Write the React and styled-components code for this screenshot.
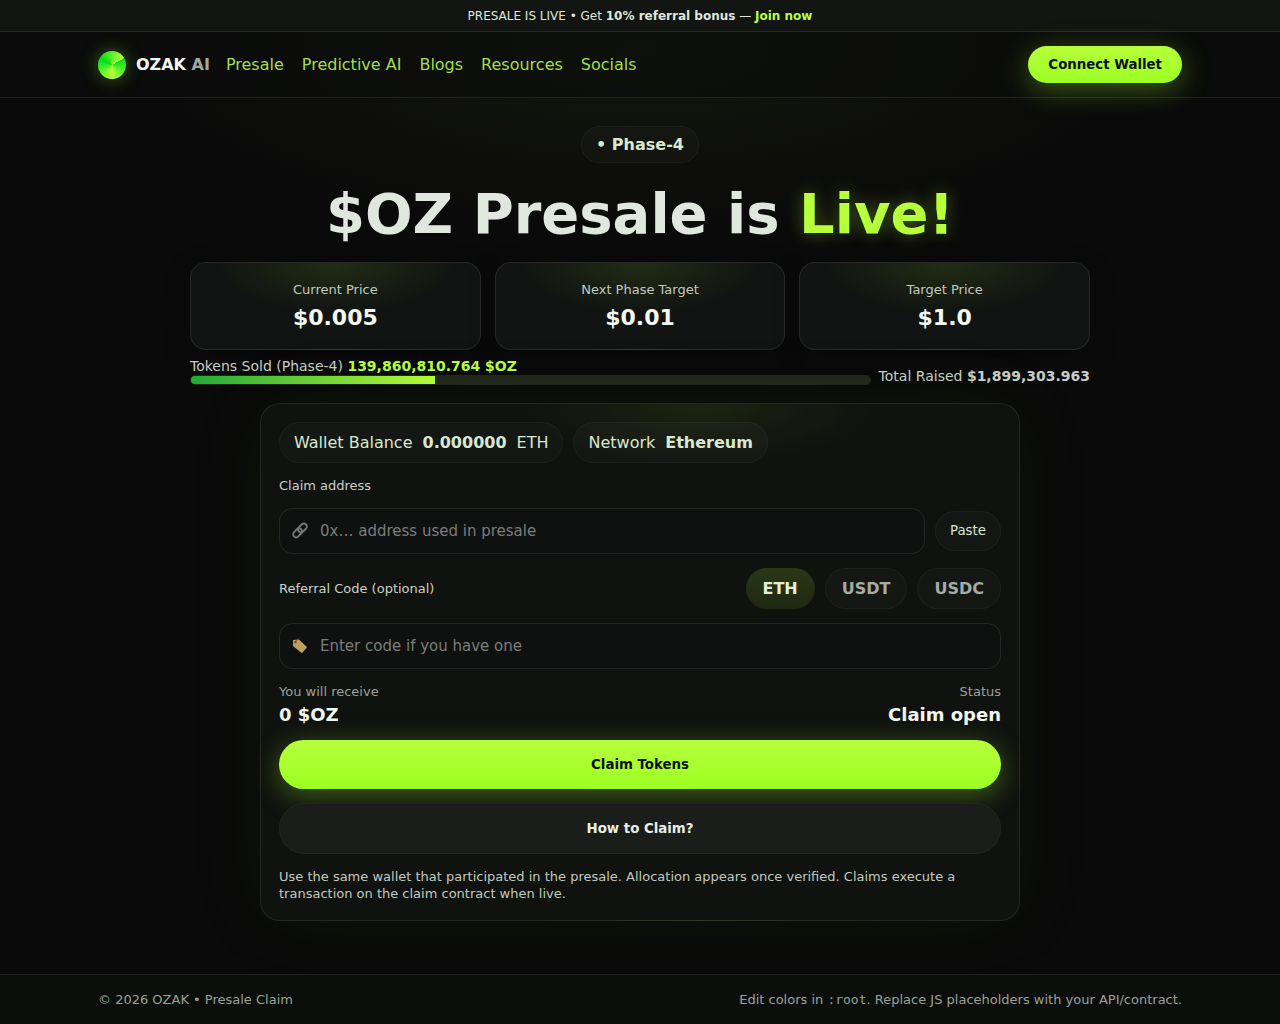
import React, { useState } from "react";
import styled, { createGlobalStyle, css } from "styled-components";

const GlobalStyle = createGlobalStyle`
  * { box-sizing: border-box; }
  html { background: #0a0a0a; }
  body {
    margin: 0;
    color: #dfe7df;
    font: 16px/19px "DejaVu Sans", sans-serif;
    background: radial-gradient(ellipse 40% 180px at 50% 50px, #14170e, transparent) no-repeat;
  }
  button, input { font-family: inherit; }
`;

const line = "rgba(255, 255, 255, 0.09)";
const softLine = "rgba(255, 255, 255, 0.04)";
const lime = "#b6ff3a";

const Page = styled.div`
  min-height: 100vh;
  display: flex;
  flex-direction: column;
`;

const TopBar = styled.div`
  padding: 9px 18px 7px;
  border-bottom: 1px solid ${line};
  background: #121512;
  font-size: 12px;
  line-height: 15px;
  text-align: center;
`;

const JoinLink = styled.a`
  color: ${lime};
  font-weight: 700;
  text-decoration: none;
`;

const Header = styled.header`
  border-bottom: 1px solid ${line};
  background: rgba(10, 11, 10, 0.6);
`;

const Container = styled.div`
  max-width: 1120px;
  margin: 0 auto;
  padding: ${(p) => p.$padY}px 18px;
  display: flex;
  align-items: center;
  justify-content: space-between;
  gap: 14px;
`;

const HeaderStart = styled.div`
  display: flex;
  align-items: center;
  gap: 16px;
`;

const Brand = styled.div`
  display: flex;
  align-items: center;
  gap: 10px;
  color: #f2f7f0;
  font-weight: 700;
`;

const Logo = styled.span`
  width: 28px;
  height: 28px;
  border-radius: 50%;
  background: conic-gradient(from 60deg, #00e01a, ${lime}, #00e01a, ${lime});
  box-shadow: 0 0 18px rgba(182, 255, 58, 0.35);
`;

const Muted = styled.span`
  color: #a2a7a2;
`;

const Nav = styled.nav`
  display: flex;
  gap: 18px;
`;

const NavLink = styled.a`
  color: #a3df43;
  text-decoration: none;
`;

const PrimaryButton = styled.button`
  border: 0;
  border-radius: 999px;
  padding: ${(p) => (p.$wide ? 16 : 10)}px 20px;
  background: linear-gradient(180deg, ${lime}, #9dff23);
  box-shadow: 0 6px 28px rgba(166, 255, 40, 0.34);
  color: #0a0f06;
  font-weight: 700;
  line-height: 17px;
`;

const SecondaryButton = styled(PrimaryButton)`
  border: 1px solid ${softLine};
  background: #1b1d1b;
  box-shadow: none;
  color: #e8eee5;
`;

const Main = styled.main`
  flex: 1;
  width: 100%;
  max-width: 936px;
  margin: 0 auto;
  padding: 28px 18px 53px;
  display: flex;
  flex-direction: column;
  align-items: center;
`;

const Pill = styled.span`
  display: inline-flex;
  align-items: center;
  gap: 10px;
  padding: ${(p) => (p.$small ? 8 : 10)}px 14px;
  border: 1px solid ${softLine};
  border-radius: 999px;
  background: rgba(255, 255, 255, 0.025);
  color: #d9e8d0;
  font-weight: ${(p) => (p.$small ? 700 : 400)};
`;

const Title = styled.h1`
  margin: 20px 0 18px;
  font-size: 56px;
  line-height: 61px;
  font-weight: 700;
  text-align: center;
`;

const Live = styled.span`
  color: ${lime};
  text-shadow: 0 0 18px rgba(182, 255, 58, 0.35);
`;

const Stats = styled.section`
  width: 100%;
  display: grid;
  grid-template-columns: repeat(3, 1fr);
  gap: 14px;
`;

const Stat = styled.div`
  display: flex;
  flex-direction: column;
  align-items: center;
  gap: 6px;
  padding: 19px 18px 17px;
  border: 1px solid ${line};
  border-radius: 16px;
  background:
    radial-gradient(ellipse 120px 50px at 50% 0, rgba(150, 220, 30, 0.12), transparent),
    #111412;
  box-shadow: 0 8px 30px rgba(0, 0, 0, 0.2);
`;

const StatLabel = styled.span`
  color: #c1c9c0;
  font-size: 13px;
  line-height: 16px;
`;

const StatValue = styled.strong`
  color: #f2f7f0;
  font-size: 22px;
  line-height: 28px;
`;

const Progress = styled.section`
  width: 100%;
  margin: 8px 0 18px;
  display: flex;
  align-items: flex-end;
  gap: 8px;
  color: #c6cfc5;
  font-size: 14px;
  line-height: 17px;
`;

const Sold = styled.div`
  flex: 1;
`;

const Highlight = styled.strong`
  color: ${lime};
`;

const Track = styled.div`
  height: 10px;
  border: 1px solid #22261d;
  border-radius: 999px;
  background: #22261d;
  overflow: hidden;
`;

const Fill = styled.div`
  height: 100%;
  background: linear-gradient(90deg, #22aa36, ${lime});
`;

const Card = styled.form`
  width: 100%;
  max-width: 760px;
  padding: 18px;
  display: grid;
  gap: 14px;
  border: 1px solid ${line};
  border-radius: 20px;
  background:
    radial-gradient(ellipse 180px 60px at 58% 0, rgba(150, 220, 30, 0.09), transparent),
    #0f120f;
  box-shadow: 0 0 80px rgba(80, 140, 30, 0.08);
`;

const Row = styled.div`
  display: flex;
  align-items: center;
  justify-content: ${(p) => (p.$spread ? "space-between" : "flex-start")};
  gap: 10px;
`;

const Label = styled.label`
  color: #c9d0c7;
  font-size: 13px;
  line-height: 17px;
`;

const Field = styled.div`
  flex: 1;
  display: flex;
  align-items: center;
  gap: 11px;
  height: 46px;
  padding: 0 11px;
  border: 1px solid ${line};
  border-radius: 14px;
  background: #0e110f;
`;

const Input = styled.input`
  flex: 1;
  min-width: 0;
  padding: 0;
  border: 0;
  outline: 0;
  background: transparent;
  color: #e8eee5;
  font-size: 15px;
  line-height: 18px;
  &::placeholder { color: #7b7d7b; opacity: 1; }
`;

const Icon = styled.svg`
  flex: none;
  width: 18px;
  height: 18px;
`;

const roundButton = css`
  border: 1px solid ${softLine};
  border-radius: 999px;
  background: rgba(255, 255, 255, 0.025);
`;

const PasteButton = styled.button`
  ${roundButton}
  padding: 10px 14px;
  color: #d9e8d0;
  line-height: 18px;
`;

const Tab = styled.button`
  ${roundButton}
  padding: 10px 16px;
  color: #a6aca4;
  font-size: 16px;
  font-weight: 700;
  line-height: 19px;
  ${(p) =>
    p.$active &&
    css`
      background: linear-gradient(180deg, #2a3716, #1e2812) border-box;
      border-color: transparent;
      color: #e3eed8;
    `}
`;

const Meta = styled.div`
  display: flex;
  flex-direction: column;
  gap: 4px;
  text-align: ${(p) => p.$align || "left"};
`;

const MetaLabel = styled.span`
  color: #9aa198;
  font-size: 13px;
  line-height: 17px;
`;

const MetaValue = styled.strong`
  color: #f2f7f0;
  font-size: 18px;
  line-height: 22px;
`;

const Note = styled.p`
  margin: 0;
  color: #c1c9c0;
  font-size: 13px;
  line-height: 17px;
`;

const Footer = styled.footer`
  border-top: 1px solid ${line};
  background: #0b0e0b;
  color: #9aa198;
  font-size: 13px;
  line-height: 17px;
`;

const Code = styled.code`
  font-family: "DejaVu Sans Mono", monospace;
  font-size: 13px;
`;

const stats = [
  ["Current Price", "$0.005"],
  ["Next Phase Target", "$0.01"],
  ["Target Price", "$1.0"],
];

function LinkIcon() {
  return (
    <Icon viewBox="0 0 18 18" fill="none" stroke="#747774" strokeWidth="1.9" aria-hidden="true">
      <rect x="-5" y="-3" width="10" height="6" rx="3" transform="translate(6.6 10.8) rotate(-45)" />
      <rect x="-5" y="-3" width="10" height="6" rx="3" transform="translate(11.4 6) rotate(-45)" />
    </Icon>
  );
}

function TagIcon() {
  return (
    <Icon viewBox="0 0 18 18" aria-hidden="true">
      <path d="M2 3 8 2.4 15.4 9.4q.8.8 0 1.6L11.6 15.6q-.8.8-1.7 0L2 9z" fill="#bda060" />
      <circle cx="4.4" cy="5" r="1.2" fill="#5c4630" />
      <path d="M4.4 5C4 3.3 6 4.3 7.8 1.4" fill="none" stroke="#a4483a" strokeWidth="1" />
    </Icon>
  );
}

export default function App() {
  const [coin, setCoin] = useState("ETH");
  const sold = 36;
  return (
    <Page>
      <GlobalStyle />
      <TopBar>
        PRESALE IS LIVE • Get <strong>10% referral bonus</strong> — <JoinLink href="#join">Join now</JoinLink>
      </TopBar>
      <Header>
        <Container $padY={14}>
          <HeaderStart>
            <Brand>
              <Logo />
              <span>OZAK <Muted>AI</Muted></span>
            </Brand>
            <Nav>
              {["Presale", "Predictive AI", "Blogs", "Resources", "Socials"].map((item) => (
                <NavLink key={item} href="#">{item}</NavLink>
              ))}
            </Nav>
          </HeaderStart>
          <PrimaryButton type="button">Connect Wallet</PrimaryButton>
        </Container>
      </Header>
      <Main>
        <Pill $small>• Phase-4</Pill>
        <Title>$OZ Presale is <Live>Live!</Live></Title>
        <Stats>
          {stats.map(([label, value]) => (
            <Stat key={label}>
              <StatLabel>{label}</StatLabel>
              <StatValue>{value}</StatValue>
            </Stat>
          ))}
        </Stats>
        <Progress>
          <Sold>
            <div>Tokens Sold (Phase-4) <Highlight>139,860,810.764 $OZ</Highlight></div>
            <Track role="progressbar" aria-label="Tokens sold" aria-valuenow={sold}>
              <Fill style={{ width: `${sold}%` }} />
            </Track>
          </Sold>
          <div>Total Raised <strong>$1,899,303.963</strong></div>
        </Progress>
        <Card onSubmit={(e) => e.preventDefault()}>
          <Row>
            <Pill>Wallet Balance <strong>0.000000</strong> ETH</Pill>
            <Pill>Network <strong>Ethereum</strong></Pill>
          </Row>
          <Label htmlFor="address">Claim address</Label>
          <Row>
            <Field>
              <LinkIcon />
              <Input id="address" placeholder="0x… address used in presale" />
            </Field>
            <PasteButton type="button">Paste</PasteButton>
          </Row>
          <Row $spread>
            <Label htmlFor="referral">Referral Code (optional)</Label>
            <Row>
              {["ETH", "USDT", "USDC"].map((name) => (
                <Tab key={name} type="button" $active={name === coin} onClick={() => setCoin(name)}>
                  {name}
                </Tab>
              ))}
            </Row>
          </Row>
          <Field>
            <TagIcon />
            <Input id="referral" placeholder="Enter code if you have one" />
          </Field>
          <Row $spread>
            <Meta>
              <MetaLabel>You will receive</MetaLabel>
              <MetaValue>0 $OZ</MetaValue>
            </Meta>
            <Meta $align="right">
              <MetaLabel>Status</MetaLabel>
              <MetaValue>Claim open</MetaValue>
            </Meta>
          </Row>
          <PrimaryButton $wide type="submit">Claim Tokens</PrimaryButton>
          <SecondaryButton $wide type="button">How to Claim?</SecondaryButton>
          <Note>
            Use the same wallet that participated in the presale. Allocation appears once verified.
            Claims execute a transaction on the claim contract when live.
          </Note>
        </Card>
      </Main>
      <Footer>
        <Container $padY={16}>
          <span>© 2026 OZAK • Presale Claim</span>
          <span>Edit colors in <Code>:root</Code>. Replace JS placeholders with your API/contract.</span>
        </Container>
      </Footer>
    </Page>
  );
}
